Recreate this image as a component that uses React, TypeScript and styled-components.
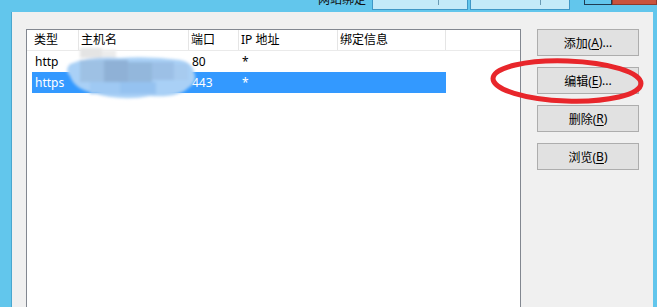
import React from "react";
import styled, { createGlobalStyle } from "styled-components";

const Global = createGlobalStyle`
  html, body { margin: 0; padding: 0; }
  body { width: 657px; height: 307px; overflow: hidden; background: #62c6ec; }
`;

const FONT = `"Noto Sans", "Noto Sans CJK SC", sans-serif`;

const Window = styled.div`
  position: relative;
  width: 657px;
  height: 307px;
  background: #62c6ec;
  display: flex;
  flex-direction: column;
  overflow: hidden;
  font-family: ${FONT};
  font-size: 12px;
  color: #000;
`;

const TitleStrip = styled.div`
  height: 12px;
  display: flex;
  align-items: flex-start;
  flex-shrink: 0;
`;

const TitleText = styled.div`
  margin-left: 318px;
  width: 52px;
  height: 6px;
  overflow: hidden;
  font-size: 12px;
  line-height: 12px;
  color: #111;
  display: flex;
  align-items: flex-end;
  & > span { margin-top: -8px; display: block; }
`;

const TitleField = styled.div<{ $w: number }>`
  width: ${(p) => p.$w}px;
  height: 10px;
  margin-left: 2px;
  background: #c4eaf9;
  border: 1px solid #3f97c6;
  border-top: none;
  box-sizing: border-box;
  position: relative;
  &::after {
    content: "";
    position: absolute;
    right: 28px;
    top: 0;
    width: 1px;
    height: 5px;
    background: #6a9ab4;
  }
`;

const CaptionBtn = styled.div<{ $w: number; $bg: string; $border: string }>`
  width: ${(p) => p.$w}px;
  height: 5px;
  background: ${(p) => p.$bg};
  border: 1px solid ${(p) => p.$border};
  border-top: none;
  box-sizing: border-box;
`;

const CaptionGroup = styled.div`
  display: flex;
  margin-left: 14px;
`;

const Body = styled.div`
  flex: 1;
  display: flex;
  margin-left: 12px;
  margin-right: 4px;
  background: #f0f0f0;
  padding: 17px 0 0 14px;
  box-shadow: -1px 0 0 #4aa7cf;
`;

const ListView = styled.div`
  width: 495px;
  background: #fff;
  border: 1px solid #828790;
  border-bottom: none;
  box-sizing: border-box;
  display: flex;
  flex-direction: column;
  padding-left: 5px;
`;

const COLS = "47px 110px 50px 99px 108px";

const HeaderRow = styled.div`
  display: grid;
  grid-template-columns: ${COLS};
  height: 20px;
  border-bottom: 1px solid #eaeaea;
  margin-left: -5px;
  padding-left: 5px;
`;

const HeaderCell = styled.div`
  display: flex;
  align-items: center;
  padding-left: 2px;
  border-right: 1px solid #e5e5e5;
  line-height: 20px;
  color: #000;
`;

const Row = styled.div<{ $selected?: boolean }>`
  display: grid;
  grid-template-columns: ${COLS};
  width: 414px;
  height: 21px;
  align-items: center;
  background: ${(p) => (p.$selected ? "#3399ff" : "transparent")};
  color: ${(p) => (p.$selected ? "#fff" : "#000")};
`;

const Cell = styled.div`
  padding-left: 3px;
  white-space: nowrap;
`;

const ButtonColumn = styled.div`
  display: flex;
  flex-direction: column;
  gap: 11px;
  margin-left: 16px;
`;

const Button = styled.div`
  width: 102px;
  height: 27px;
  box-sizing: border-box;
  background: #e1e1e1;
  border: 1px solid #adadad;
  display: flex;
  align-items: center;
  justify-content: center;
  color: #000;
`;

const Key = styled.span`
  text-decoration: underline;
  text-underline-offset: 2px;
`;

const Blob = styled.svg`
  position: absolute;
  left: 60px;
  top: 44px;
  width: 142px;
  height: 62px;
  pointer-events: none;
`;

const Ring = styled.svg`
  position: absolute;
  left: 488px;
  top: 56px;
  width: 160px;
  height: 52px;
  pointer-events: none;
`;

export default function App() {
  return (
    <>
      <Global />
      <Window>
        <TitleStrip>
          <TitleText>
            <span>网站绑定</span>
          </TitleText>
          <TitleField $w={96} />
          <TitleField $w={100} />
          <CaptionGroup>
            <CaptionBtn $w={28} $bg="#62c6ec" $border="#1f3c52" />
            <CaptionBtn $w={45} $bg="#c9533d" $border="#8e3a2c" />
          </CaptionGroup>
        </TitleStrip>
        <Body>
          <ListView>
            <HeaderRow>
              <HeaderCell>类型</HeaderCell>
              <HeaderCell>主机名</HeaderCell>
              <HeaderCell>端口</HeaderCell>
              <HeaderCell>IP 地址</HeaderCell>
              <HeaderCell>绑定信息</HeaderCell>
            </HeaderRow>
            <Row>
              <Cell>http</Cell>
              <Cell></Cell>
              <Cell>80</Cell>
              <Cell>*</Cell>
              <Cell></Cell>
            </Row>
            <Row $selected>
              <Cell>https</Cell>
              <Cell></Cell>
              <Cell>443</Cell>
              <Cell>*</Cell>
              <Cell></Cell>
            </Row>
          </ListView>
          <ButtonColumn>
            <Button>
              添加(<Key>A</Key>)...
            </Button>
            <Button>
              编辑(<Key>E</Key>)...
            </Button>
            <Button>
              删除(<Key>R</Key>)
            </Button>
            <Button>
              浏览(<Key>B</Key>)
            </Button>
          </ButtonColumn>
        </Body>
        <Blob viewBox="0 0 142 62">
          <defs>
            <filter id="bl" x="-20%" y="-20%" width="140%" height="140%">
              <feGaussianBlur stdDeviation="1.6" />
            </filter>
          </defs>
          <g filter="url(#bl)">
            <rect x="20" y="4" width="22" height="10" fill="#e4e4e4" />
            <rect x="42" y="6" width="14" height="8" fill="#ececec" />
            <path
              d="M10 20 Q4 26 10 32 Q14 44 30 48 Q60 58 90 52 Q118 54 128 44 Q138 38 134 28 Q132 18 120 16 Q90 12 60 14 Q30 12 10 20 Z"
              fill="#a9d0f6"
            />
            <rect x="20" y="16" width="24" height="22" fill="#9ec1e4" />
            <rect x="44" y="16" width="24" height="22" fill="#8fb1d6" />
            <rect x="68" y="18" width="24" height="20" fill="#93b7dc" />
            <rect x="92" y="18" width="22" height="18" fill="#9cc0e6" />
            <rect x="114" y="20" width="14" height="16" fill="#a7cbef" />
            <rect x="30" y="38" width="30" height="12" fill="#9fc9f3" />
            <rect x="60" y="38" width="36" height="12" fill="#95c2f0" />
          </g>
        </Blob>
        <Ring viewBox="0 0 160 52">
          <ellipse
            cx="79"
            cy="25"
            rx="74"
            ry="20"
            fill="none"
            stroke="#e8262b"
            strokeWidth="5"
            transform="rotate(2 79 25)"
          />
        </Ring>
      </Window>
    </>
  );
}
